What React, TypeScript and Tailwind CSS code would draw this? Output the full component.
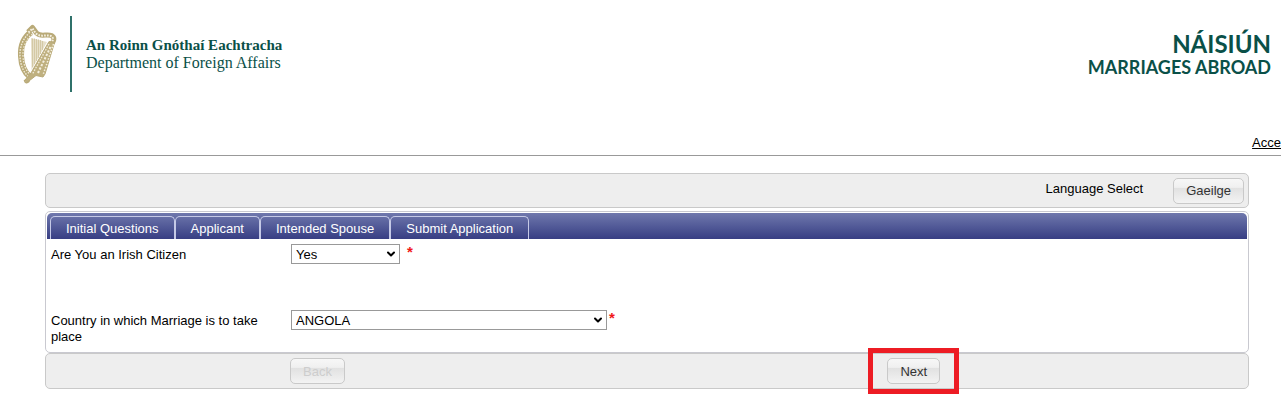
import React, { useState } from 'react';
import clsx from 'clsx';
import { ChevronDown } from 'lucide-react';

const TABS = ['Initial Questions', 'Applicant', 'Intended Spouse', 'Submit Application'];

const HarpLogo: React.FC = () => (
  <svg viewBox="0 0 40 62" className="w-10 h-[62px] shrink-0" fill="none" aria-hidden="true">
    {/* strings */}
    <path d="M14 15L30 19L14.5 47Z" fill="#e6dfc8" />
    <path d="M15.5 15.5V44M17.5 15.5V41M19.5 16V38M21.5 16.5V35M23.5 17V31M25.5 18V27" stroke="#cfc39c" strokeWidth="0.8" />
    {/* pillar */}
    <path d="M14.5 9C7 14 3.5 23 4 33C4.5 43 8 50 13 54" stroke="#b9aa78" strokeWidth="6" />
    <path d="M13 9.5C6 15 2.6 24 3 33C3.4 43 7 50 12 54" stroke="#f1ebd9" strokeWidth="1.4" strokeDasharray="1.6 1.2" />
    <path d="M15.5 11C9 16 5.6 24 6 33C6.4 42 9 48 13.5 52" stroke="#f1ebd9" strokeWidth="1.2" strokeDasharray="1.6 1.4" />
    {/* neck */}
    <path d="M11 9L15.5 4.5L19.5 10C24 14.5 29 10.5 34.5 12.5C38 14.5 37 17.5 35.5 20" stroke="#b9aa78" strokeWidth="5" strokeLinejoin="round" />
    <path d="M11.5 9.5L15.5 5.5L18.5 10C23.5 15 29 11 34 13C37 15 36 17 34.5 20" stroke="#f4efdf" strokeWidth="2" strokeDasharray="1.7 1.2" />
    {/* sound box */}
    <path d="M32 18.5L37.5 19.5L28 51L26 54L19 52.5L10 59.5L8 57L14 50Z" fill="#bfb07f" stroke="#b9aa78" strokeWidth="1" strokeLinejoin="round" />
    <path d="M32 21L15.5 51" stroke="#f1ebd9" strokeWidth="1.3" strokeDasharray="1.6 1.3" />
    <path d="M33.5 24L20.5 51" stroke="#f4efdf" strokeWidth="2" strokeDasharray="2.2 1.6" />
    <path d="M36.5 21L26 52" stroke="#f4efdf" strokeWidth="1.5" strokeDasharray="1.5 1.5" />
    {/* foot */}
    <path d="M7.5 57.5C8 60 10 60.5 12 58.5" stroke="#b9aa78" strokeWidth="1.5" strokeLinecap="round" />
  </svg>
);

interface FormButtonProps {
  children: React.ReactNode;
  disabled?: boolean;
}

const FormButton: React.FC<FormButtonProps> = ({ children, disabled = false }) => (
  <button
    type="button"
    disabled={disabled}
    className={clsx(
      'h-[26px] px-3 pt-px rounded-[5px] border border-[#c9c9c9] text-[13px] leading-4',
      'bg-[linear-gradient(#f7f7f7_0%,#f0f0f0_35%,#e1e1e1_38%,#f3f3f3_100%)]',
      disabled ? 'text-[#cdcdcd]' : 'text-[#333333]',
    )}
  >
    {children}
  </button>
);

interface SelectFieldProps {
  id: string;
  label: string;
  options: string[];
  widthClass: string;
  starClass: string;
}

const SelectField: React.FC<SelectFieldProps> = ({ id, label, options, widthClass, starClass }) => {
  const [value, setValue] = useState(options[0]);

  return (
    <div className="flex items-start">
      <label htmlFor={id} className="w-60 pr-6 pt-[3px] shrink-0">
        {label}
      </label>
      <div className={clsx('relative', widthClass)}>
        <select
          id={id}
          required
          value={value}
          onChange={(e) => setValue(e.target.value)}
          className="block appearance-none w-full h-5 pl-1 pr-5 pt-px bg-white border border-[#999999] leading-4"
        >
          {options.map((option) => (
            <option key={option}>{option}</option>
          ))}
        </select>
        <ChevronDown
          size={12}
          strokeWidth={4}
          className="absolute right-[3px] top-1 text-black pointer-events-none"
        />
      </div>
      <span className={clsx('text-[#f01818] text-[15px] leading-4 font-bold', starClass)}>*</span>
    </div>
  );
};

const App: React.FC = () => {
  const [activeTab, setActiveTab] = useState(TABS[0]);

  return (
    <div className="bg-white text-black overflow-x-hidden text-[13px] leading-4 font-['Liberation_Sans',Arial,sans-serif]">
      <header className="border-b border-[#999999]">
        <div className="flex justify-between items-start h-[135px] pt-4 pl-[17px] pr-[10px] text-[#0a5048]">
          <div className="flex items-center">
            <HarpLogo />
            <div className="w-0.5 h-[76px] ml-[13px] bg-[#2f716a]" />
            <div className="ml-[14px] font-['Liberation_Serif',serif]">
              <div className="text-[15px] leading-[17px] font-bold">An Roinn Gnóthaí Eachtracha</div>
              <div className="text-base leading-[17px]">Department of Foreign Affairs</div>
            </div>
          </div>
          <div className="pt-4 text-right font-bold font-['Lato',sans-serif]">
            <div className="text-2xl leading-6">NÁISIÚN</div>
            <div className="text-lg leading-[22px]">MARRIAGES ABROAD</div>
          </div>
        </div>
        <div className="flex justify-end h-5">
          <a href="#accessibility" className="underline">
            Acce
          </a>
        </div>
      </header>

      <main className="ml-[45px] mr-8 pt-[17px] pb-3">
        <div className="flex justify-end items-center h-[35px] pr-1 rounded-[5px] border border-[#c9c9c9] bg-[#eeeeee]">
          <span className="pb-1 mr-[30px]">Language Select</span>
          <FormButton>Gaeilge</FormButton>
        </div>

        <section className="mt-[3px] p-px rounded-[5px] border border-[#c9c9d0]">
          <nav className="flex items-end h-[26px] pl-[3px] rounded-t-[5px] bg-linear-to-b from-[#7078ad] to-[#383e83]">
            {TABS.map((tab) => (
              <button
                key={tab}
                type="button"
                aria-current={tab === activeTab}
                onClick={() => setActiveTab(tab)}
                className="h-[23px] px-[15px] pt-px rounded-t-[5px] border border-b-0 border-[#c5c9e6] text-white"
              >
                {tab}
              </button>
            ))}
          </nav>
          <form className="flex flex-col gap-[46px] pt-[5px] pl-1 pb-1.5">
            <SelectField
              id="irish-citizen"
              label="Are You an Irish Citizen"
              options={['Yes', 'No']}
              widthClass="w-[109px]"
              starClass="ml-[7px]"
            />
            <SelectField
              id="country"
              label="Country in which Marriage is to take place"
              options={['ANGOLA']}
              widthClass="w-[316px]"
              starClass="ml-0.5"
            />
          </form>
        </section>

        <footer className="flex items-center h-9 rounded-[5px] border border-[#c9c9c9] bg-[#eeeeee]">
          <div className="w-[70%] pl-[244px]">
            <FormButton disabled>Back</FormButton>
          </div>
          <div className="relative">
            <FormButton>Next</FormButton>
            <div className="absolute -inset-x-[19px] -inset-y-[10px] border-[5px] border-[#ed1c24] pointer-events-none" />
          </div>
        </footer>
      </main>
    </div>
  );
};

export default App;
